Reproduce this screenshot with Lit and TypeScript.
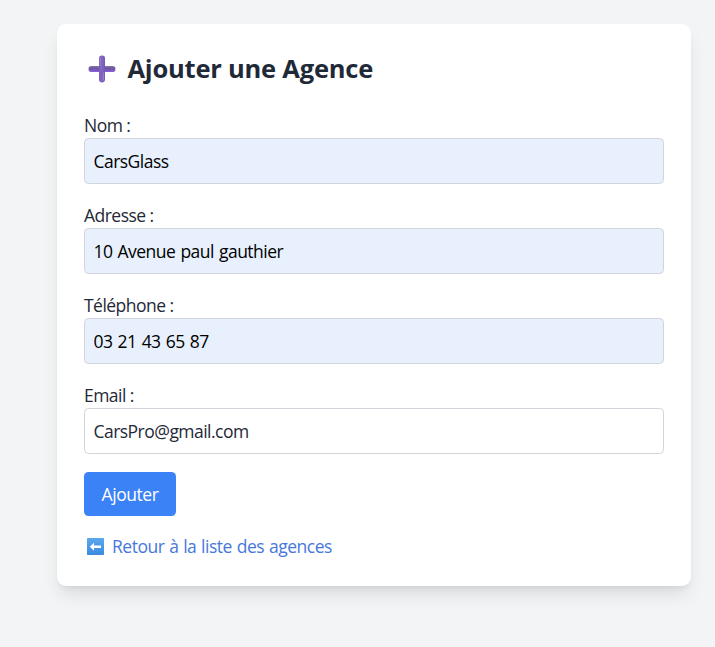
import { LitElement, html, css } from "lit";
import { customElement } from "lit/decorators.js";
import { classMap } from "lit/directives/class-map.js";

interface Field {
  label: string;
  name: string;
  type: string;
  value: string;
  filled: boolean;
}

const FIELDS: Field[] = [
  { label: "Nom :", name: "nom", type: "text", value: "CarsGlass", filled: true },
  { label: "Adresse :", name: "adresse", type: "text", value: "10 Avenue paul gauthier", filled: true },
  { label: "Téléphone :", name: "telephone", type: "text", value: "03 21 43 65 87", filled: true },
  { label: "Email :", name: "email", type: "email", value: "CarsPro@gmail.com", filled: false },
];

const plusIcon = html`
  <svg class="plus" viewBox="0 0 28 28" aria-hidden="true">
    <defs>
      <linearGradient id="v" x1="0" x2="1" y1="0" y2="0">
        <stop offset="0" stop-color="#7c62b4" />
        <stop offset=".5" stop-color="#8467c4" />
        <stop offset="1" stop-color="#7458b4" />
      </linearGradient>
      <linearGradient id="h" x1="0" x2="0" y1="0" y2="1">
        <stop offset="0" stop-color="#85749f" />
        <stop offset=".45" stop-color="#6d55a0" />
        <stop offset="1" stop-color="#8a5fe0" />
      </linearGradient>
    </defs>
    <rect x="0.6" y="11" width="26.8" height="6" rx="2.8" fill="url(#h)" />
    <rect x="11" y="0.6" width="6" height="26.8" rx="2.8" fill="url(#v)" />
    <path d="M12.2 3v7.6M15.6 18v7" stroke="#9e85d2" stroke-width=".9" stroke-linecap="round" />
  </svg>`;

const backIcon = html`
  <svg class="back" viewBox="0 0 17 17" aria-hidden="true">
    <defs>
      <linearGradient id="b" x1="0" x2="0" y1="0" y2="1">
        <stop offset="0" stop-color="#5ba8ee" />
        <stop offset="1" stop-color="#3b8ae0" />
      </linearGradient>
    </defs>
    <rect width="17" height="17" rx=".8" fill="url(#b)" />
    <path d="M2.8 8.7 7 4.7v2.8h7v2.4H7v2.8z" fill="#fff" />
  </svg>`;

@customElement("app-root")
export class AppRoot extends LitElement {
  static styles = css`
    :host {
      display: block;
      box-sizing: border-box;
      min-height: 100vh;
      padding: 24px 24px 0 57px;
      background: #f3f4f6;
      color: #1f2937;
      font: 17.5px/27px "Open Sans", "Noto Sans", sans-serif;
      letter-spacing: -0.53px;
    }
    * {
      box-sizing: border-box;
    }
    .card {
      width: 634px;
      height: 562px;
      padding: 27px;
      border-radius: 9px;
      background: #fff;
      box-shadow: 0 11px 17px -3px rgba(0, 0, 0, 0.1), 0 4px 7px -4px rgba(0, 0, 0, 0.1);
    }
    .title {
      display: flex;
      align-items: center;
      height: 36px;
      margin: 0 0 25px;
      padding-left: 4px;
      gap: 11.5px;
      font-size: 25.5px;
      line-height: 36px;
      font-weight: 700;
      letter-spacing: -0.22px;
    }
    .heading {
      padding-bottom: 2px;
      line-height: 34px;
    }
    .plus {
      width: 28px;
      height: 28px;
      flex: none;
    }
    .field {
      display: flex;
      flex-direction: column;
      margin-bottom: 18px;
    }
    .label {
      height: 26px;
      line-height: 27px;
    }
    .input {
      width: 580px;
      height: 46px;
      margin: 0;
      padding: 0 8.5px;
      border: 1px solid #d1d5db;
      border-radius: 4.5px;
      outline: 0;
      background: #fff;
      color: inherit;
      font: inherit;
      letter-spacing: inherit;
      word-spacing: 1.1px;
    }
    .filled {
      background: #e8f0fe;
      color: #000;
    }
    .submit {
      display: block;
      width: 92px;
      height: 44px;
      padding: 1px 0 0;
      border: 0;
      border-radius: 4.5px;
      background: #3b82f6;
      color: #fff;
      font: inherit;
      letter-spacing: -0.45px;
    }
    .link {
      display: flex;
      align-items: center;
      width: max-content;
      height: 27px;
      margin-top: 17px;
      padding-left: 3px;
      gap: 8px;
      color: #4678db;
      letter-spacing: -0.48px;
      word-spacing: 0.7px;
      text-decoration: none;
    }
    .back {
      width: 17px;
      height: 17px;
      flex: none;
    }
  `;

  render() {
    return html`
      <main class="card">
        <h1 class="title">${plusIcon}<span class="heading">Ajouter une Agence</span></h1>
        <form @submit=${(e: Event) => e.preventDefault()}>
          ${FIELDS.map(
            (f) => html`
              <div class="field">
                <label class="label" for=${f.name}>${f.label}</label>
                <input
                  class=${classMap({ input: true, filled: f.filled })}
                  id=${f.name}
                  name=${f.name}
                  type=${f.type}
                  spellcheck="false"
                  .value=${f.value}
                />
              </div>
            `
          )}
          <button class="submit" type="submit">Ajouter</button>
        </form>
        <a class="link" href="#">${backIcon}<span>Retour à la liste des agences</span></a>
      </main>
    `;
  }
}
